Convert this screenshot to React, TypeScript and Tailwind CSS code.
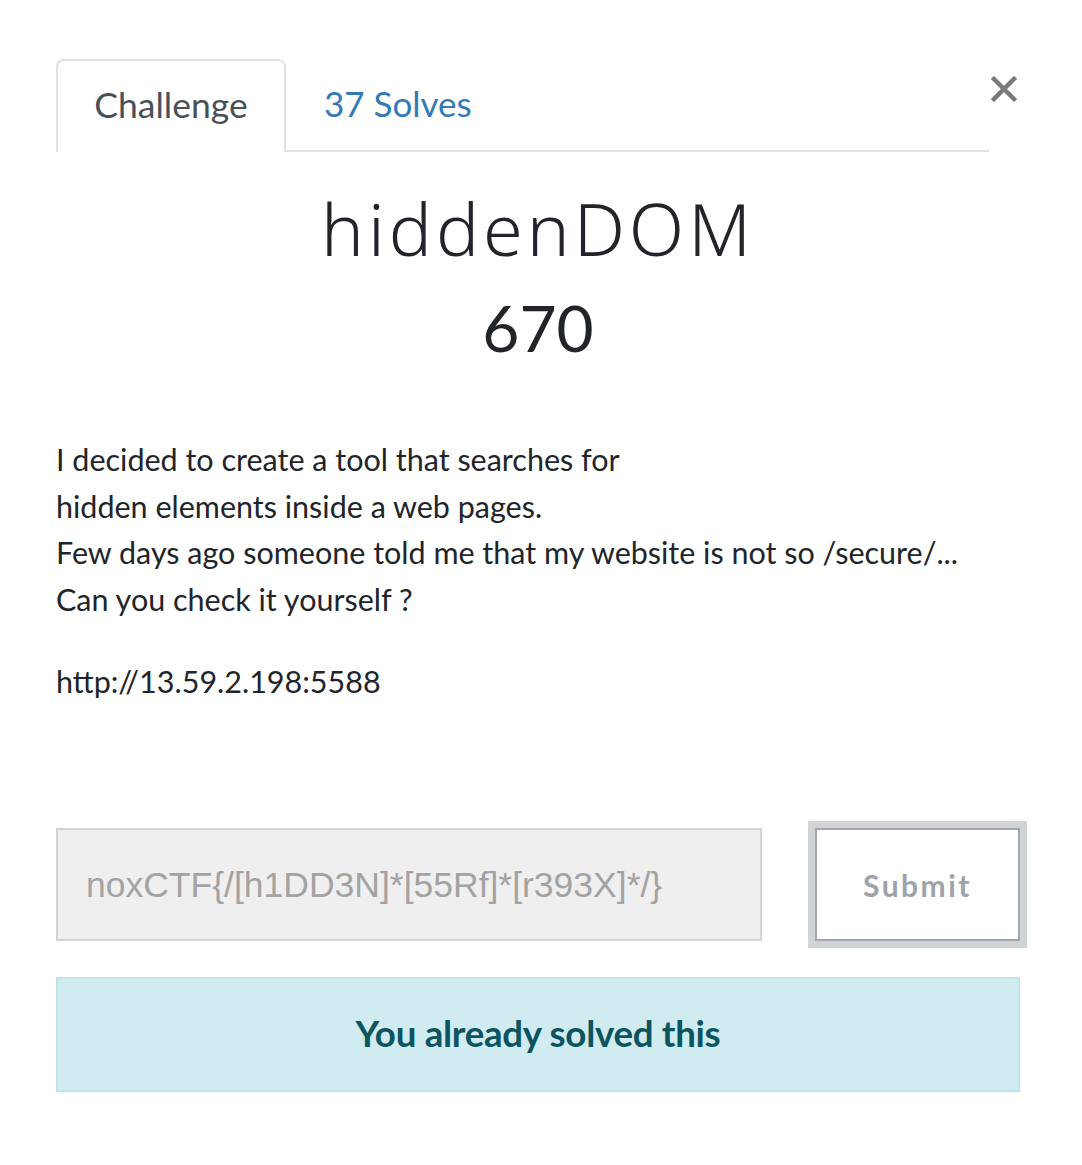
const lato = { fontFamily: "Lato, 'Noto Sans', sans-serif" };

const App = () => {
  return (
    <div className="w-[1082px] h-[1165px] bg-white" style={lato}>
      <div className="pt-[59px] pl-[56px] pr-[62px]">
        {/* tabs + close */}
        <div className="flex items-start">
          <div className="flex flex-1 border-b-2 border-[#dee2e6]">
            <div className="-mb-[2px] w-[230px] h-[93px] border-2 border-b-0 border-[#dee2e6] rounded-t-[8px] bg-white flex items-center justify-center pb-[4px] text-[35.5px] text-[#495057]">
              Challenge
            </div>
            <div className="h-[91px] pl-[38px] pb-[2px] flex items-center text-[35px] text-[#337ab7]">
              37 Solves
            </div>
          </div>
          <button className="w-[31px] mt-[17px] flex justify-end pr-[3px]">
            <svg width="26" height="26" viewBox="0 0 26 26">
              <path d="M3 3 L23 23 M23 3 L3 23" stroke="#7a7a7a" strokeWidth="4.5" strokeLinecap="square" />
            </svg>
          </button>
        </div>

        {/* title */}
        <div className="text-center text-[#212529]">
          <h1 className="mt-[33px] text-[72px] leading-[86px] font-light tracking-[4px]" style={{ fontFamily: "'Noto Sans', Lato, sans-serif" }}>
            hiddenDOM
          </h1>
          <h2 className="mt-[17px] text-[64px] leading-[80px]">670</h2>
        </div>

        {/* description */}
        <div className="mt-[68px] text-[30.5px] leading-[46.7px] text-[#212529]">
          <p>I decided to create a tool that searches for</p>
          <p>hidden elements inside a web pages.</p>
          <p>Few days ago someone told me that my website is not so /secure/...</p>
          <p>Can you check it yourself ?</p>
          <p className="mt-[35px]">http://13.59.2.198:5588</p>
        </div>

        {/* flag form */}
        <div className="mt-[116px] flex items-center w-[971px]">
          <input
            className="w-[706px] h-[113px] bg-[#efefef] border-2 border-[#ced4da] px-[28px] pt-[2px] text-[35.5px] placeholder:text-[#a3a3a3] outline-none"
            style={{ fontFamily: "'Liberation Sans', Arial, sans-serif" }}
            placeholder="noxCTF{/[h1DD3N]*[55Rf]*[r393X]*/}"
          />
          <button className="ml-[46px] w-[219px] h-[127px] border-[7px] border-[#d1d4d7] bg-white">
            <span className="flex items-center justify-center w-full h-full border-2 border-[#a3a7ad] pt-[2px] text-[30px] font-bold tracking-[2.5px] text-[#9ea3ab]">
              Submit
            </span>
          </button>
        </div>

        {/* status */}
        <div className="mt-[29px] w-[964px] h-[115px] bg-[#d1ecf1] border-2 border-[#bee5eb] flex items-center justify-center text-[36.7px] font-bold tracking-[-0.3px] text-[#0c5460]">
          You already solved this
        </div>
      </div>
    </div>
  );
};

export default App;
